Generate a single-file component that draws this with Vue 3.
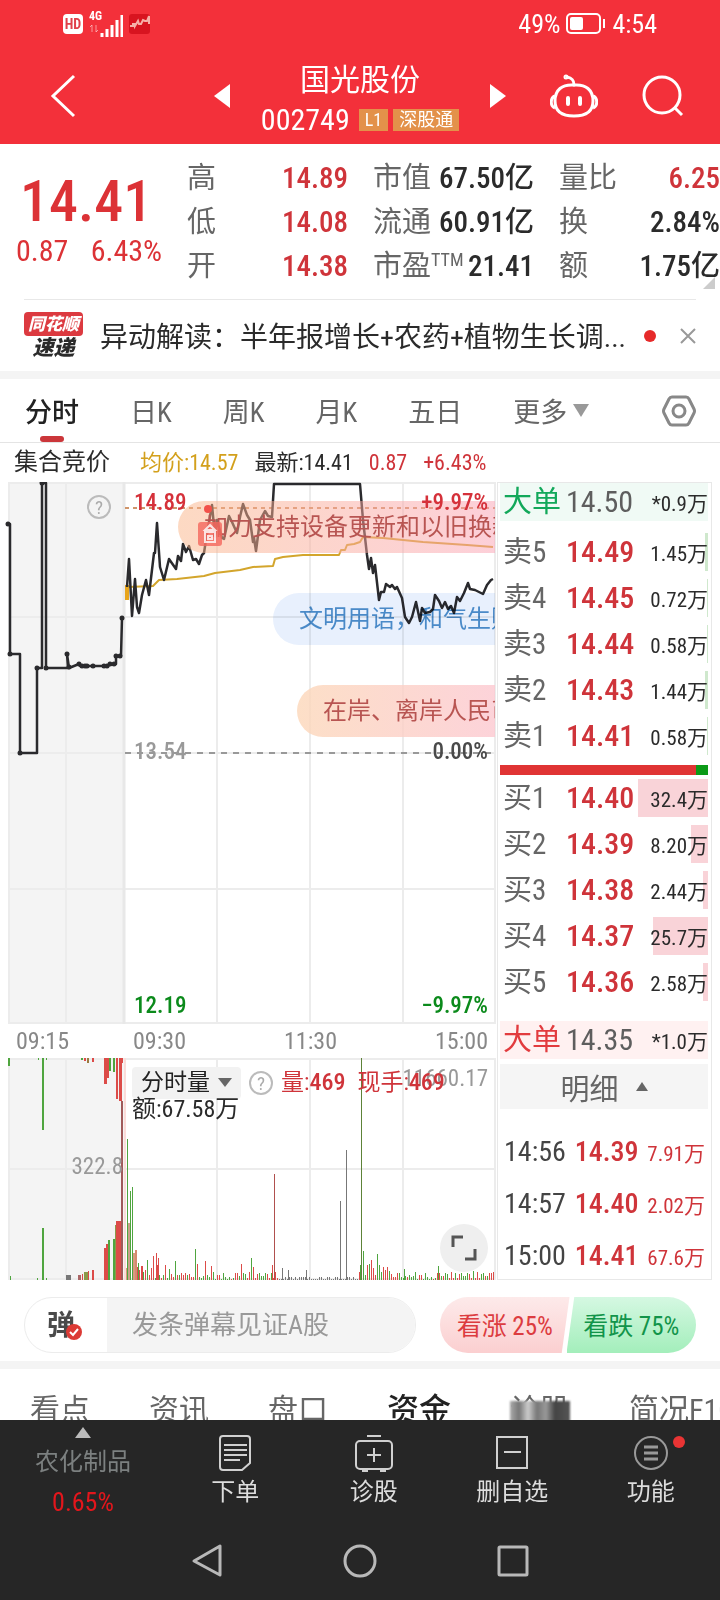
<template>
  <div class="page">
    <header class="top">
      <div class="status">
        <div class="status-left">
          <span class="hd">HD</span>
          <svg width="34" height="30" viewBox="0 0 34 30">
            <text x="0" y="11" class="net">4G</text>
            <path d="M3 16v7M1 18l2-2M7 16v7M9 21l-2 2" stroke="#fff" opacity=".5" fill="none" />
            <path d="M13 28v-4M18 28v-8M23 28v-12M28 28v-17M33 28v-22" stroke="#fff" stroke-width="3" />
          </svg>
          <svg width="22" height="22" viewBox="0 0 22 22">
            <rect y="1" width="21" height="20" rx="3" fill="#d81420" />
            <path d="M1 13h3v-2h2v2l3-5 1 3h2l2-4 2 1h2l2-5v8" fill="none" stroke="#f6b0a8" stroke-width="2" />
          </svg>
        </div>
        <div class="status-right">
          <span>49%</span>
          <svg width="40" height="22" viewBox="0 0 40 22">
            <rect x="1" y="1" width="33" height="19" rx="4" fill="none" stroke="#fff" stroke-width="2" />
            <rect x="4" y="4" width="13" height="13" rx="2" fill="#fff" />
            <path d="M38 6v9" stroke="#fff" stroke-width="2" />
          </svg>
          <span>4:54</span>
        </div>
      </div>
      <div class="title-bar">
        <button class="icon-btn back" aria-label="返回">
          <svg width="26" height="44" viewBox="0 0 26 44">
            <path d="M24 2L3 22l21 20" fill="none" stroke="#fff" stroke-width="3" />
          </svg>
        </button>
        <div class="title-mid">
          <button class="icon-btn" aria-label="上一只">
            <svg width="16" height="24" viewBox="0 0 16 24"><path d="M16 0v24L0 12z" fill="#fff" /></svg>
          </button>
          <div class="title">
            <h1>国光股份</h1>
            <div class="code">
              <span class="code-num">002749</span>
              <span class="badge">L1</span>
              <span class="badge">深股通</span>
            </div>
          </div>
          <button class="icon-btn" aria-label="下一只">
            <svg width="16" height="24" viewBox="0 0 16 24"><path d="M0 0v24l16-12z" fill="#fff" /></svg>
          </button>
        </div>
        <div class="title-right">
          <button class="icon-btn" aria-label="助手">
            <svg width="48" height="44" viewBox="0 0 48 44" fill="none" stroke="#fff" stroke-width="3">
              <path d="M24 11C12 10 5 16 5 27c0 11 7 15 19 15s19-4 19-15c0-11-7-17-19-16z" />
              <path d="M5 22c-5 2-5 10 0 12M43 22c5 2 5 10 0 12" />
              <path d="M24 11c0-5-2-7-7-8" stroke-linecap="round" />
              <circle cx="16" cy="3" r="1" />
              <path d="M18 24v6M30 24v6" stroke-width="4" stroke-linecap="round" />
            </svg>
          </button>
          <button class="icon-btn" aria-label="搜索">
            <svg width="42" height="42" viewBox="0 0 42 42" fill="none" stroke="#fff" stroke-width="3">
              <circle cx="20" cy="20" r="18" />
              <path d="M32 32l8 8" />
            </svg>
          </button>
        </div>
      </div>
    </header>

    <section class="quote">
      <div class="quote-main">
        <div class="now">14.41</div>
        <div class="diff"><span>0.87</span><span>6.43%</span></div>
      </div>
      <dl v-for="(col, i) in stats" :key="i" class="stat-col">
        <div v-for="s in col" :key="s.label" class="stat">
          <dt>{{ s.label }}<sup v-if="s.sup">{{ s.sup }}</sup></dt>
          <dd :class="{ red: s.red }">{{ s.value }}</dd>
        </div>
      </dl>
      <span class="corner"></span>
    </section>

    <section class="news">
      <div class="news-logo">
        <span class="news-brand">同花顺</span>
        <span class="news-sub">速递</span>
      </div>
      <a href="#" class="news-text">异动解读：半年报增长+农药+植物生长调...</a>
      <span class="news-dot"></span>
      <button class="icon-btn" aria-label="关闭">
        <svg width="16" height="16" viewBox="0 0 16 16"><path d="M1 1l14 14M15 1L1 15" stroke="#999" stroke-width="2" /></svg>
      </button>
    </section>

    <nav class="periods">
      <button v-for="(p, i) in periods" :key="p" :class="['period', { active: i === 0 }]">{{ p }}</button>
      <button class="period more">
        更多
        <svg width="16" height="13" viewBox="0 0 16 13"><path d="M0 0h16L8 13z" fill="#999" /></svg>
      </button>
      <button class="icon-btn setting" aria-label="设置">
        <svg width="34" height="32" viewBox="0 0 34 32" fill="none" stroke="#888" stroke-width="3">
          <path d="M10 2h14q2 0 3 2l5 10q1 2 0 4l-5 10q-1 2-3 2H10q-2 0-3-2L2 18q-1-2 0-4L7 4q1-2 3-2z" />
          <circle cx="17" cy="16" r="6" />
        </svg>
      </button>
    </nav>

    <div class="legend">
      <span class="legend-name">集合竞价</span>
      <span class="gold">均价:14.57</span>
      <span>最新:14.41</span>
      <span class="red">0.87</span>
      <span class="red">+6.43%</span>
    </div>

    <main class="market">
      <div class="charts">
        <div class="plot">
          <svg class="chart" viewBox="0 0 496 542">
            <rect x="8" y="0" width="117" height="542" fill="#f4f4f4" />
            <path d="M8 1h488M8 135h488M8 271h488M8 407h488M8 541h488M9 0v542M66 0v542M217 0v542M310 0v542M403 0v542M495 0v542" class="grid" />
            <path d="M124 0v542" stroke="#e8e8e8" stroke-width="3" />
            <path d="M125 26h370" stroke="#d0956a" stroke-width="2" stroke-dasharray="4 4" />
            <path d="M125 271h370" stroke="#999" stroke-width="2" stroke-dasharray="6 6" />
            <polyline :points="auction" class="line" />
            <circle v-for="(d, i) in auctionDots" :key="i" :cx="d[0]" :cy="d[1]" r="2.5" fill="#2a2a2d" />
            <path d="M127 103v15" stroke="#e8a51c" stroke-width="4" />
            <polyline :points="average" class="line avg" />
            <polyline :points="price" class="line" />
            <g class="help">
              <circle cx="99" cy="25" r="11" />
              <text x="99" y="32" text-anchor="middle">?</text>
            </g>
          </svg>
          <div class="danmaku first">加力支持设备更新和以旧换新</div>
          <div class="danmaku second">文明用语，和气生财</div>
          <div class="danmaku third">在岸、离岸人民币</div>
          <svg class="chart over" viewBox="0 0 496 542">
            <circle cx="208" cy="27" r="4" fill="#f2504a" />
            <rect x="198" y="40" width="24" height="24" rx="3" fill="#f4675c" opacity=".8" />
            <path d="M210 43l-5 5h10zM205 50h10v10h-10zM208 54h4v3h-4z" fill="none" stroke="#fff" stroke-width="2" opacity=".8" />
            <g class="labels">
              <text x="134" y="28" fill="#d5313a">14.89</text>
              <text x="488" y="28" fill="#d5313a" text-anchor="end">+9.97%</text>
              <text x="134" y="277" fill="#999">13.54</text>
              <text x="488" y="277" fill="#4a4a4a" text-anchor="end">0.00%</text>
              <text x="134" y="531" fill="#0b8a1b">12.19</text>
              <text x="488" y="531" fill="#0b8a1b" text-anchor="end">−9.97%</text>
            </g>
          </svg>
        </div>
        <div class="times">
          <span>09:15</span><span>09:30</span><span>11:30</span><span>15:00</span>
        </div>
        <div class="plot">
          <svg class="chart" viewBox="0 0 496 222">
            <rect x="8" y="0" width="117" height="222" fill="#f4f4f4" />
            <path d="M8 1h488M8 111h488M8 221h488M9 0v222M66 0v222M217 0v222M310 0v222M403 0v222M495 0v222" class="grid" />
            <rect v-for="(b, i) in volumes" :key="i" :x="b.x" :y="222 - b.h" :width="b.w" :height="b.h" :fill="b.c" />
            <rect v-for="(b, i) in hanging" :key="'h' + i" :x="b[0]" y="0" :width="b[2]" :height="b[1]" :fill="b[3]" />
            <path d="M122 43v179" stroke="#a05a5a" stroke-width="2" />
            <path d="M125 0v222" stroke="#fbdcd9" stroke-width="2" />
            <text x="123" y="116" class="vol-text" text-anchor="end">322.8</text>
            <text x="488" y="28" class="vol-text" text-anchor="end">11660.17</text>
          </svg>
          <div class="vol-head">
            <label class="vol-select">
              <select aria-label="指标"><option>分时量</option></select>
              <svg width="14" height="9" viewBox="0 0 14 9"><path d="M0 0h14L7 9z" fill="#666" /></svg>
            </label>
            <svg class="help" width="24" height="24" viewBox="0 0 24 24">
              <circle cx="12" cy="12" r="11" />
              <text x="12" y="19" text-anchor="middle">?</text>
            </svg>
            <span class="red">量:<b>469</b></span>
            <span class="red">现手:<b>469</b></span>
          </div>
          <div class="vol-amount">额:67.58万</div>
          <button class="expand" aria-label="全屏">
            <svg width="26" height="26" viewBox="0 0 26 26"><path d="M2 12V2h10M24 14v10H14" fill="none" stroke="#555" stroke-width="3" /></svg>
          </button>
        </div>
      </div>

      <aside class="book">
        <div class="big sell"><span>大单</span><b>14.50</b><i>*0.9万</i></div>
        <div v-for="r in sells" :key="r.label" class="order">
          <span class="depth green-bg" :style="{ width: r.depth + 'px' }"></span>
          <span class="order-label">{{ r.label }}</span>
          <b>{{ r.price }}</b>
          <i>{{ r.volume }}</i>
        </div>
        <div class="ratio"></div>
        <div v-for="r in buys" :key="r.label" class="order">
          <span class="depth" :style="{ width: r.depth + 'px' }"></span>
          <span class="order-label">{{ r.label }}</span>
          <b>{{ r.price }}</b>
          <i>{{ r.volume }}</i>
        </div>
        <div class="big buy"><span>大单</span><b>14.35</b><i>*1.0万</i></div>
        <button class="detail">
          明细
          <svg width="12" height="9" viewBox="0 0 12 9"><path d="M0 9h12L6 0z" fill="#666" /></svg>
        </button>
        <div class="ticks">
          <div v-for="t in ticks" :key="t.time" class="tick">
            <span>{{ t.time }}</span><b>{{ t.price }}</b><i>{{ t.volume }}</i>
          </div>
        </div>
      </aside>
    </main>

    <section class="comment">
      <div class="comment-box">
        <button class="comment-switch" aria-label="弹幕">
          弹
          <svg width="16" height="16" viewBox="0 0 16 16">
            <circle cx="8" cy="8" r="8" fill="#dc3a35" />
            <path d="M4 8l3 3 5-6" fill="none" stroke="#fff" stroke-width="2" />
          </svg>
        </button>
        <input type="text" placeholder="发条弹幕见证A股" aria-label="弹幕内容" />
      </div>
      <div class="vote">
        <button class="up">看涨 25%</button>
        <button class="down">看跌 75%</button>
      </div>
    </section>

    <nav class="sections">
      <a v-for="s in sections" :key="s" href="#" :class="{ current: s === '资金', smear: s === '诊股' }">{{ s }}</a>
    </nav>

    <footer class="bottom">
      <div class="tools">
        <button class="tool board">
          <svg width="16" height="11" viewBox="0 0 16 11"><path d="M0 11h16L8 0z" fill="#bbb" /></svg>
          <span class="board-name">农化制品</span>
          <span class="board-rate">0.65%</span>
        </button>
        <button class="tool">
          <svg width="34" height="38" viewBox="0 0 34 38" class="icon">
            <path d="M5 2h24q3 0 3 3v24l-8 7H5q-3 0-3-3V5q0-3 3-3z" />
            <path d="M6 11h23M6 16h23M6 21h23M6 26h16" />
          </svg>
          <span>下单</span>
        </button>
        <button class="tool">
          <svg width="40" height="38" viewBox="0 0 40 38" class="icon">
            <rect x="2" y="7" width="36" height="28" rx="4" />
            <path d="M13 2h14M20 14v14M13 21h14M8 37h6M26 37h6" />
          </svg>
          <span>诊股</span>
        </button>
        <button class="tool">
          <svg width="34" height="38" viewBox="0 0 34 38" class="icon">
            <rect x="2" y="3" width="30" height="31" />
            <path d="M9 18h17" />
          </svg>
          <span>删自选</span>
        </button>
        <button class="tool">
          <svg width="36" height="38" viewBox="0 0 36 38" class="icon muted">
            <circle cx="18" cy="19" r="16" />
            <path d="M11 13h14M11 19h14M11 25h14" stroke-width="3" />
          </svg>
          <span>功能</span>
          <span class="tool-dot"></span>
        </button>
      </div>
      <div class="system">
        <button class="icon-btn" aria-label="后退">
          <svg width="32" height="36" viewBox="0 0 32 36" class="sys"><path d="M29 3v29L3 18z" /></svg>
        </button>
        <button class="icon-btn" aria-label="主页">
          <svg width="34" height="36" viewBox="0 0 34 36" class="sys"><circle cx="17" cy="18" r="15" /></svg>
        </button>
        <button class="icon-btn" aria-label="任务">
          <svg width="32" height="36" viewBox="0 0 32 36" class="sys"><rect x="2" y="4" width="28" height="28" rx="1" /></svg>
        </button>
      </div>
    </footer>
  </div>
</template>

<script setup>
const stats = [
  [
    { label: '高', value: '14.89', red: true },
    { label: '低', value: '14.08', red: true },
    { label: '开', value: '14.38', red: true }
  ],
  [
    { label: '市值', value: '67.50亿' },
    { label: '流通', value: '60.91亿' },
    { label: '市盈', sup: 'TTM', value: '21.41' }
  ],
  [
    { label: '量比', value: '6.25', red: true },
    { label: '换', value: '2.84%' },
    { label: '额', value: '1.75亿' }
  ]
]

const periods = ['分时', '日K', '周K', '月K', '五日']
const sections = ['看点', '资讯', '盘口', '资金', '诊股', '简况F10']

const sells = [
  { label: '卖5', price: '14.49', volume: '1.45万', depth: 3 },
  { label: '卖4', price: '14.45', volume: '0.72万', depth: 1 },
  { label: '卖3', price: '14.44', volume: '0.58万', depth: 1 },
  { label: '卖2', price: '14.43', volume: '1.44万', depth: 3 },
  { label: '卖1', price: '14.41', volume: '0.58万', depth: 1 }
]
const buys = [
  { label: '买1', price: '14.40', volume: '32.4万', depth: 70 },
  { label: '买2', price: '14.39', volume: '8.20万', depth: 17 },
  { label: '买3', price: '14.38', volume: '2.44万', depth: 5 },
  { label: '买4', price: '14.37', volume: '25.7万', depth: 55 },
  { label: '买5', price: '14.36', volume: '2.58万', depth: 5 }
]
const ticks = [
  { time: '14:56', price: '14.39', volume: '7.91万' },
  { time: '14:57', price: '14.40', volume: '2.02万' },
  { time: '15:00', price: '14.41', volume: '67.6万' }
]

const auction = '8,42 10,42 10,172 20,172 20,271 37,271 37,186 42,186 42,1 46,1 46,186 68,186 67,172 69,186 79,182 80,184 108,184 110,182 116,182 116,174 121,174 122,136'
const auctionDots = [
  [8, 42], [10, 172], [20, 271], [37, 186], [42, 1], [46, 186], [67, 172], [69, 185], [79, 182], [82, 184],
  [85, 184], [87, 184], [93, 184], [104, 184], [107, 184], [110, 182], [114, 182], [116, 174], [120, 174], [122, 136]
]
const price = '127,105 129,77 132,134 135,97 137,125 139,131 142,113 146,98 149,113 154,71 155,71 157,41 160,85 164,98 169,77 176,87 178,74 181,79 183,62 186,70 189,64 193,78 196,77 199,82 202,73 204,71 207,51 212,23 215,55 217,38 222,56 224,57 229,34 232,40 237,51 240,35 243,22 247,33 250,38 253,60 254,56 256,69 260,38 265,29 268,34 272,35 274,2 360,2 363,38 367,73 369,87 371,76 373,91 375,83 379,118 381,110 384,110 386,102 390,105 392,103 395,107 397,105 402,116 405,135 409,141 412,135 416,120 420,139 422,126 425,131 430,130 433,127 435,113 439,119 442,126 445,120 448,127 451,124 454,131 457,115 460,119 464,111 468,101 470,107 475,108 483,112 487,103 491,98 493,97'
const average = '128,105 153,104 159,98 177,97 204,94 215,91 240,88 253,85 273,84 275,77 283,75 303,73 339,73 341,68 345,68 347,63 354,62 360,60 363,55 383,56 423,60 467,63 493,65'

const R = '#dc4b48'
const G = '#4fa53f'
const K = '#777'

// x, height, width, colour of the bars that hang from the top edge
const hanging = [
  [8, 8, 2, G], [42, 72, 2, G], [38, 2, 1, G], [46, 2, 1, G], [81, 2, 2, G], [84, 3, 2, R], [87, 5, 2, '#9a7a40'],
  [92, 4, 2, R], [104, 26, 3, R], [107, 20, 2, R], [109, 13, 2, G], [113, 14, 2, G], [116, 41, 2, R], [119, 43, 3, R], [122, 5, 1, R]
]

const peaks = [
  [10, 4, 1, G], [42, 52, 2, G], [37, 2, 1, G], [46, 2, 1, G], [66, 5, 5, K], [78, 5, 3, '#a66'], [82, 6, 1, R], [84, 8, 4, '#8a9a4a'],
  [88, 9, 1, R], [92, 10, 2, R], [104, 32, 2, R], [106, 36, 2, R], [108, 40, 2, G], [113, 41, 2, G], [115, 55, 2, '#8a9a4a'], [116, 59, 5, R],
  [125, 12, 2, '#d99a80'], [127, 141, 1, G], [128, 57, 2, '#c9a08a'], [130, 89, 1, G], [132, 93, 1, G], [133, 27, 2, '#d99a80'], [135, 30, 2, '#d58a70'],
  [138, 17, 1, G], [141, 14, 2, R], [147, 20, 1, G], [153, 24, 1, R], [156, 27, 1, R], [158, 22, 1, R], [175, 19, 1, G],
  [195, 31, 1, G], [197, 16, 1, R], [205, 19, 1, R], [211, 14, 1, R], [241, 16, 1, R], [251, 22, 1, G], [253, 13, 1, R],
  [272, 15, 1, R], [274, 106, 1, '#b0504e'], [282, 12, 1, K], [288, 10, 1, K], [306, 10, 1, K], [340, 79, 1, K], [346, 130, 1, K],
  [360, 15, 1, G], [361, 222, 1, '#5d8238'], [363, 29, 1, G], [371, 20, 1, R], [377, 26, 1, G], [379, 15, 1, G], [369, 16, 1, G],
  [404, 11, 1, G], [438, 14, 1, G], [473, 9, 1, G], [493, 8, 1, R]
].map(([x, h, w, c]) => ({ x, h, w, c }))

const base = []
for (let x = 137; x < 494; x += 2) {
  const n = (x * x * 31 + x * 17) % 101
  const quiet = x > 277 && x < 359
  const top = x < 170 ? 14 : x > 363 && x < 390 ? 14 : 7
  base.push({ x, h: quiet ? 1 + (n % 3 === 0 ? 2 : 0) : 1 + Math.round((n / 100) * top), w: 1, c: quiet ? K : n % 2 ? R : G })
}
const volumes = [...base, ...peaks]
</script>

<style>
body {
  margin: 0;
  background: #fff;
}
</style>

<style scoped>
.page {
  font-family: "Roboto Condensed", Roboto, "Noto Sans CJK SC", sans-serif;
  color: #2b2b2b;
  overflow: hidden;
}

button,
input,
select {
  font: inherit;
  color: inherit;
  border: 0;
  padding: 0;
  margin: 0;
  background: none;
}

svg {
  display: block;
  flex: none;
}

b {
  font-weight: 500;
}

i {
  font-style: normal;
}

a {
  color: inherit;
  text-decoration: none;
}

.red {
  color: #cf343a;
}

.top {
  height: 144px;
  background: #f3303a;
  color: #fff;
}

.status {
  height: 48px;
  padding: 0 63px;
  display: flex;
  justify-content: space-between;
  align-items: center;
  font-size: 26px;
}

.status-left,
.status-right {
  display: flex;
  align-items: center;
  gap: 6px;
}

.hd {
  width: 20px;
  height: 20px;
  border-radius: 4px;
  background: #fff;
  color: #e0404a;
  font-size: 14px;
  font-weight: 700;
  line-height: 20px;
  text-align: center;
}

.net {
  font-size: 12px;
  font-weight: 700;
  fill: #fff;
}

.title-bar {
  height: 96px;
  padding: 0 36px;
  display: grid;
  grid-template-columns: 1fr auto 1fr;
  align-items: center;
}

.back {
  justify-self: start;
  margin-left: 14px;
}

.title-mid {
  display: flex;
  align-items: center;
  gap: 30px;
}

.title {
  min-width: 200px;
  padding-top: 8px;
  text-align: center;
}

.title h1 {
  margin: 0;
  font-size: 30px;
  line-height: 40px;
  font-weight: 400;
}

.code {
  display: flex;
  justify-content: center;
  align-items: center;
  gap: 5px;
  line-height: 40px;
}

.code-num {
  font-size: 30px;
  margin-right: 4px;
}

.badge {
  padding: 0 6px;
  background: #e3914a;
  font-size: 18px;
  line-height: 22px;
}

.title-right {
  display: flex;
  justify-content: flex-end;
  align-items: center;
  gap: 44px;
}

.quote {
  position: relative;
  height: 155px;
  display: grid;
  grid-template-columns: 146px 1fr 1fr 1fr;
  column-gap: 25px;
  padding-left: 16px;
  box-sizing: border-box;
}

.quote-main {
  color: #dc3236;
  padding-top: 27px;
}

.now {
  font-size: 58px;
  line-height: 60px;
  font-weight: 500;
  padding-left: 4px;
}

.diff {
  display: flex;
  justify-content: space-between;
  font-size: 30px;
  line-height: 40px;
}

.stat-col {
  margin: 0;
  padding-top: 12px;
}

.stat {
  display: flex;
  justify-content: space-between;
  align-items: baseline;
  height: 44px;
  line-height: 44px;
  white-space: nowrap;
}

.stat dt {
  font-size: 29px;
  color: #666;
  display: flex;
}

.stat sup {
  font-size: 18px;
  line-height: 20px;
  padding-top: 6px;
}

.stat dd {
  margin: 0;
  font-size: 29px;
  font-weight: 500;
}

.corner {
  position: absolute;
  right: 5px;
  bottom: 10px;
  border: 6px solid #ccc;
  border-top-color: transparent;
  border-left-color: transparent;
}

.news {
  height: 72px;
  margin: 0 24px;
  border-top: 1px solid #e8e8e8;
  box-sizing: border-box;
  display: flex;
  align-items: center;
}

.news-logo {
  width: 59px;
  display: flex;
  flex-direction: column;
  align-items: center;
  font-weight: 900;
  font-style: italic;
}

.news-brand {
  background: #dc3a40;
  border-radius: 4px;
  color: #fff;
  font-size: 17px;
  line-height: 24px;
  padding: 0 4px;
}

.news-sub {
  font-size: 21px;
  line-height: 24px;
}

.news-text {
  flex: 1;
  margin-left: 17px;
  padding-top: 4px;
  font-size: 28px;
  line-height: 40px;
  white-space: nowrap;
}

.news-dot {
  width: 12px;
  height: 12px;
  border-radius: 6px;
  background: #e62a2a;
  margin-right: 24px;
}

.periods {
  height: 72px;
  border-top: 8px solid #f4f4f4;
  border-bottom: 1px solid #e4e4e4;
  box-sizing: border-box;
  padding: 0 24px 0 25px;
  display: flex;
  align-items: stretch;
  gap: 51px;
}

.period {
  position: relative;
  font-size: 27px;
  color: #666;
  white-space: nowrap;
}

.period.active {
  color: #222;
  font-weight: 500;
}

.period.active::after {
  content: "";
  position: absolute;
  left: 15px;
  bottom: 0;
  width: 24px;
  height: 6px;
  border-radius: 3px;
  background: #cb363a;
}

.more {
  display: flex;
  align-items: center;
  gap: 6px;
}

.setting {
  margin-left: auto;
}

.legend {
  height: 39px;
  padding-left: 14px;
  display: flex;
  align-items: baseline;
  gap: 16px;
  font-size: 22px;
  line-height: 38px;
  white-space: nowrap;
}

.legend-name {
  font-size: 24px;
  margin-right: 14px;
}

.gold {
  color: #d3a01c;
}

.market {
  display: flex;
}

.charts {
  flex: 1;
  min-width: 0;
}

.plot {
  position: relative;
  overflow: hidden;
}

.chart {
  width: 100%;
  height: auto;
}

.over {
  position: absolute;
  left: 0;
  top: 0;
}

.grid {
  stroke: #ececec;
  stroke-width: 2;
}

.line {
  fill: none;
  stroke: #2a2a2d;
  stroke-width: 2.5;
  stroke-linejoin: round;
}

.line.avg {
  stroke: #d3a52c;
  stroke-width: 2;
}

.help circle {
  fill: none;
  stroke: #bbb;
  stroke-width: 2;
}

.help text {
  font-size: 19px;
  fill: #aaa;
}

.labels text {
  font-size: 23px;
  font-weight: 500;
}

.danmaku {
  position: absolute;
  right: 1px;
  height: 52px;
  box-sizing: border-box;
  padding-left: 26px;
  border-radius: 26px 0 0 26px;
  font-size: 24px;
  line-height: 52px;
  white-space: nowrap;
  overflow: hidden;
}

.first {
  top: 19px;
  left: 178px;
  background: linear-gradient(90deg, rgba(250, 180, 135, .5), rgba(250, 160, 178, .5));
  color: #b85552;
}

.second {
  top: 111px;
  left: 273px;
  background: #e8f0fd;
  color: #4a8ac8;
  mix-blend-mode: multiply;
}

.third {
  top: 203px;
  left: 297px;
  background: linear-gradient(90deg, rgba(252, 215, 185, .8), rgba(252, 200, 208, .8));
  color: #b85552;
}

.times {
  height: 34px;
  padding: 0 8px 0 16px;
  display: grid;
  grid-template-columns: 117px 1fr 1fr 1fr;
  align-items: center;
  font-size: 24px;
  color: #888;
}

.times span:nth-child(3) {
  text-align: center;
}

.times span:nth-child(4) {
  text-align: right;
}

.vol-text {
  font-size: 23px;
  fill: #999;
}

.vol-head {
  position: absolute;
  left: 132px;
  top: 8px;
  display: flex;
  align-items: center;
  gap: 8px;
  font-size: 23px;
  line-height: 32px;
  white-space: nowrap;
}

.vol-head span + span {
  margin-left: 4px;
}

.vol-head b {
  font-size: 24px;
}

.vol-select {
  display: flex;
  align-items: center;
  gap: 8px;
  height: 32px;
  padding: 0 9px;
  border-radius: 4px;
  background: #f2f2f2;
}

.vol-select select {
  appearance: none;
  color: #222;
}

.vol-amount {
  position: absolute;
  left: 132px;
  top: 36px;
  font-size: 24px;
  line-height: 30px;
}

.expand {
  position: absolute;
  right: 8px;
  bottom: 8px;
  width: 48px;
  height: 48px;
  border-radius: 24px;
  background: #efefef;
  display: flex;
  align-items: center;
  justify-content: center;
}

.book {
  width: 215px;
  margin: 0 8px 0 1px;
  border: 1px solid #e8e8e8;
  box-sizing: border-box;
  padding: 0 3px 0 2px;
  height: 798px;
}

.order,
.big {
  position: relative;
  display: grid;
  grid-template-columns: 63px 1fr auto;
  align-items: center;
  height: 46px;
  line-height: 38px;
  padding-left: 3px;
  white-space: nowrap;
}

.order-label,
.big span {
  position: relative;
  font-size: 29px;
  color: #666;
}

.order b,
.big b {
  position: relative;
  font-size: 30px;
  color: #cf343a;
}

.order i,
.big i {
  position: relative;
  font-size: 21px;
  padding-top: 4px;
}

.big {
  height: 38px;
  line-height: 34px;
}

.big b {
  font-weight: 400;
  color: #5e5e5e;
}

.big.sell {
  background: #f0faf5;
  margin-bottom: 8px;
}

.big.sell span {
  color: #12a85a;
}

.big.buy {
  background: #fff1f1;
  margin: 16px 0 5px;
}

.big.buy span {
  color: #e23b3e;
}

.depth {
  position: absolute;
  right: 0;
  top: 4px;
  height: 38px;
  background: #f9d3d8;
}

.green-bg {
  background: #cfe8cd;
}

.ratio {
  height: 10px;
  margin: 6px 0 0;
  background: linear-gradient(90deg, #e03434 94%, #0c9a18 94%);
}

.detail {
  width: 100%;
  height: 45px;
  background: #f5f5f5;
  color: #666;
  font-size: 29px;
  display: flex;
  align-items: center;
  justify-content: center;
  gap: 17px;
}

.ticks {
  padding-top: 17px;
}

.tick {
  display: flex;
  justify-content: space-between;
  align-items: center;
  height: 52px;
  line-height: 38px;
  padding: 0 3px 0 4px;
  font-size: 28px;
  color: #444;
}

.tick b,
.tick i {
  color: #cf343a;
}

.tick i {
  font-size: 21px;
  padding-top: 4px;
}

.comment {
  height: 81px;
  padding: 17px 24px 0;
  box-sizing: border-box;
  display: flex;
  justify-content: space-between;
}

.comment-box {
  flex: 1;
  height: 56px;
  margin-right: 24px;
  border: 1px solid #ececec;
  border-radius: 28px;
  box-sizing: border-box;
  overflow: hidden;
  display: flex;
}

.comment-switch {
  position: relative;
  width: 82px;
  padding: 0 10px 4px 0;
  font-size: 28px;
  font-weight: 700;
  color: #4a4a4a;
  flex: none;
}

.comment-switch svg {
  position: absolute;
  left: 41px;
  top: 26px;
}

.comment-box input {
  flex: 1;
  min-width: 0;
  background: #f4f4f4;
  padding-left: 25px;
  font-size: 26px;
}

.comment-box input::placeholder {
  color: #999;
  opacity: 1;
}

.vote {
  width: 256px;
  height: 56px;
  border-radius: 28px;
  overflow: hidden;
  display: flex;
  font-size: 25px;
}

.vote button {
  flex: 1;
  padding-bottom: 3px;
  white-space: nowrap;
}

.up {
  background: linear-gradient(#fdeaea, #fbcfd0);
  clip-path: polygon(0 0, 100% 0, 94% 100%, 0 100%);
  color: #dc3c40;
}

.down {
  margin-left: -3px;
  background: linear-gradient(#d5f8e2, #a3eebb);
  clip-path: polygon(6% 0, 100% 0, 100% 100%, 0 100%);
  color: #12944a;
}

.vote .up {
  background: linear-gradient(#fdeaea, #fbcfd0);
}

.vote .down {
  background: linear-gradient(#d5f8e2, #a3eebb);
}

.sections {
  height: 59px;
  border-top: 8px solid #f4f4f4;
  box-sizing: border-box;
  padding: 30px 0 0 30px;
  display: flex;
  align-items: center;
  gap: 59px;
  overflow: hidden;
  font-size: 30px;
  line-height: 40px;
  color: #666;
  white-space: nowrap;
}

.sections .current {
  font-size: 32px;
  font-weight: 500;
  color: #222;
}

.smear {
  position: relative;
}

.smear::after {
  content: "";
  position: absolute;
  left: 0;
  right: 0;
  top: 11px;
  bottom: 0;
  background: linear-gradient(90deg, #aaa, #777 15%, #ccc 30%, #777 45%, #999 60%, #444 75%, #555);
  filter: blur(1px);
}

.bottom {
  background: #262626;
  color: #ddd;
  height: 180px;
  position: relative;
}

.tools {
  display: grid;
  grid-template-columns: 166px 1fr 1fr 1fr 1fr;
  height: 102px;
}

.tool {
  position: relative;
  display: flex;
  flex-direction: column;
  align-items: center;
  padding-top: 14px;
  gap: 4px;
  font-size: 24px;
  line-height: 32px;
}

.board {
  padding-top: 7px;
  gap: 8px;
}

.board-name {
  color: #7c8080;
}

.board-rate {
  color: #e3161c;
  font-size: 26px;
}

.tool-dot {
  position: absolute;
  right: 35px;
  top: 16px;
  width: 12px;
  height: 12px;
  border-radius: 6px;
  background: #e93434;
}

.icon {
  fill: none;
  stroke: #d0d0d0;
  stroke-width: 2;
}

.muted {
  stroke: #999;
}

.system {
  display: flex;
  justify-content: center;
  align-items: center;
  gap: 120px;
  height: 78px;
}

.sys {
  fill: none;
  stroke: #b8b8b8;
  stroke-width: 3;
  stroke-linejoin: round;
}
</style>
